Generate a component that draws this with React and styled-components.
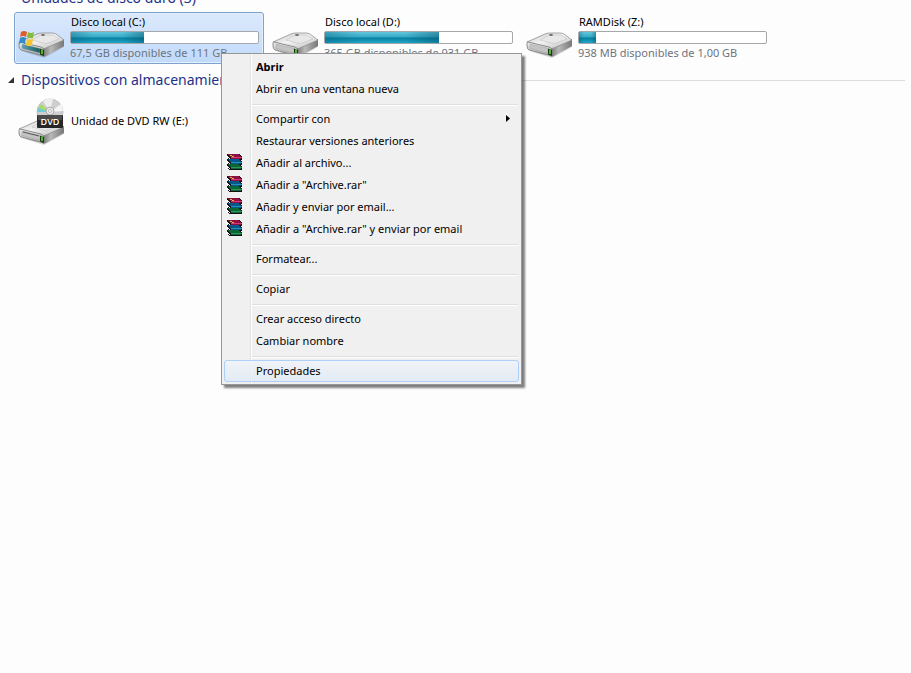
import React from 'react';
import styled, { createGlobalStyle } from 'styled-components';

const GlobalStyle = createGlobalStyle`
  * { box-sizing: border-box; }
  body {
    margin: 0;
    background: #fdfdfd;
    color: #000;
    font-family: "Noto Sans", "Open Sans", sans-serif;
    font-size: 11px;
  }
  button { font: inherit; color: inherit; }
`;

const Explorer = styled.main`
  position: relative;
  min-height: 100vh;
  overflow: hidden;
`;

const Section = styled.section`
  padding: 0 6px 0 8px;
`;

const SectionHeader = styled.header`
  display: flex;
  align-items: ${(p) => (p.$clipped ? 'flex-end' : 'center')};
  gap: 7px;
  height: ${(p) => (p.$clipped ? '12px' : '32px')};
  padding-bottom: ${(p) => (p.$clipped ? '4px' : '0')};
`;

const SectionTitle = styled.h2`
  margin: 0;
  font-family: "Noto Sans", "Open Sans", sans-serif;
  font-size: 14px;
  line-height: 20px;
  font-weight: 400;
  color: #1e3287;
  white-space: nowrap;
`;

const Rule = styled.span`
  flex: 1;
  height: 1px;
  background: #dcdcdc;
`;

const Expander = styled.svg`
  width: 6px;
  height: 6px;
  flex: none;
  fill: #333;
`;

const Tiles = styled.div`
  display: flex;
  flex-wrap: wrap;
  gap: 4px;
  padding-left: 6px;
`;

const Tile = styled.button`
  display: flex;
  align-items: center;
  gap: 5px;
  width: 250px;
  height: 52px;
  padding: 0 4px 2px 2px;
  text-align: left;
  border: 1px solid ${(p) => (p.$selected ? '#7da2ce' : 'transparent')};
  border-radius: 3px;
  background: ${(p) => (p.$selected ? 'linear-gradient(#dbe9fc, #c1dafb)' : 'none')};
  box-shadow: ${(p) => (p.$selected ? 'inset 0 0 0 1px #e4effc' : 'none')};
`;

const DriveArt = styled.svg`
  width: 48px;
  height: 48px;
  flex: none;
`;

const Details = styled.span`
  display: flex;
  flex: 1;
  flex-direction: column;
  gap: 1px;
  white-space: nowrap;
`;

const Name = styled.span`
  padding-left: 1px;
  line-height: 16px;
`;

const Space = styled.span`
  line-height: 16px;
  color: #6d7480;
`;

const Meter = styled.span`
  display: block;
  height: 13px;
  border: 1px solid #a4a8ab;
  border-radius: 2px;
  background: #fff;
`;

const MeterFill = styled.span`
  display: block;
  height: 11px;
  background:
    linear-gradient(90deg, rgba(0, 90, 120, 0.35), transparent 30%, transparent 70%, rgba(0, 70, 95, 0.4)),
    linear-gradient(#62c6dc, #35a9c7 45%, #08809f 55%, #20a8ca);
`;

const Menu = styled.div`
  position: absolute;
  left: 221px;
  top: 53px;
  width: 301px;
  padding: 2px;
  border: 1px solid #979797;
  background: linear-gradient(90deg, #f0f0f0 28px, #e2e3e3 28px, #e2e3e3 29px, #fff 29px, #fff 30px, #f0f0f0 30px);
  box-shadow: 3px 3px 2px rgba(0, 0, 0, 0.5);
`;

const MenuItem = styled.button`
  display: grid;
  grid-template-columns: 31px 1fr 12px;
  align-items: center;
  width: 100%;
  height: 22px;
  padding: 0 0 2px;
  text-align: left;
  white-space: nowrap;
  font-weight: ${(p) => (p.$bold ? 700 : 400)};
  border: 1px solid ${(p) => (p.$active ? '#aecff7' : 'transparent')};
  border-radius: 3px;
  background: ${(p) => (p.$active ? 'linear-gradient(rgba(240, 244, 250, 0.8), rgba(224, 233, 245, 0.8))' : 'none')};
`;

const IconCell = styled.span`
  display: flex;
  padding-left: 1px;
`;

const Separator = styled.hr`
  height: 2px;
  margin: 4px 1px 2px 28px;
  border: 0;
  border-top: 1px solid #dedede;
  background: #fff;
`;

const Glyph = styled.svg`
  width: 16px;
  height: 16px;
`;

const Arrow = styled.svg`
  width: 4px;
  height: 7px;
`;

function DriveBody({ system }) {
  return (
    <>
      <defs>
        <linearGradient id="driveTop" x1="0" y1="0" x2="1" y2="1">
          <stop offset="0" stopColor="#c5c5c5" />
          <stop offset="0.45" stopColor="#f3f3f3" />
          <stop offset="1" stopColor="#bdbdbd" />
        </linearGradient>
        <linearGradient id="driveFront" x1="0" y1="0" x2="0" y2="1">
          <stop offset="0" stopColor="#f1f1f1" />
          <stop offset="1" stopColor="#a4a4a4" />
        </linearGradient>
        <linearGradient id="driveSide" x1="0" y1="0" x2="1" y2="0">
          <stop offset="0" stopColor="#707070" />
          <stop offset="0.4" stopColor="#b9b9b9" />
          <stop offset="1" stopColor="#777" />
        </linearGradient>
        <linearGradient id="driveSystem" x1="0" y1="0" x2="1" y2="0">
          <stop offset="0" stopColor="#5e9fb7" />
          <stop offset="1" stopColor="#165d5b" />
        </linearGradient>
      </defs>
      <path d="M4 38 27 45 47 34 47 32 27 41Z" fill="#000" opacity=".15" />
      <path d="M26 34 47 26V33L29 43Q27 44 25 43Z" fill="url(#driveSide)" />
      <path d="M2 29 20 21Q22 20 25 20H35Q37 20 39 21L47 27 29 35Q27 36 24 35Z" fill="url(#driveTop)" stroke="#858585" strokeWidth=".7" />
      <path d="M15 27 24 22H36L42 26 31 30Q29 31 26 30Z" fill="#e8e8e8" stroke="#b8b8b8" strokeWidth=".5" />
      <path d="M3 29 24 34Q27 35 27 38V43L4 37Q2 36 2 33V30Q2 29 3 29Z" fill="url(#driveFront)" stroke="#777" strokeWidth=".8" />
      <path d="M5 31 23 35.5V40L5 35.5Z" fill={system ? 'url(#driveSystem)' : '#c4c4c4'} stroke="#999" strokeWidth=".4" />
      <path d="M23 35.5 27 37V43L23 41.5Z" fill="#183e16" />
      <path d="M25 36.5V41" stroke="#76e044" strokeWidth="1.4" />
      <ellipse cx="26" cy="22" rx="2" ry=".7" fill="#444" />
    </>
  );
}

function DriveIcon({ kind }) {
  return (
    <DriveArt viewBox="0 0 48 48" aria-hidden="true">
      {kind === 'dvd' ? (
        <>
          <g transform="translate(0 3)">
            <DriveBody />
            <path d="M6 32 22 36" stroke="#555" strokeWidth="1" />
          </g>
          <circle cx="33" cy="15" r="13" fill="#cfcfcf" stroke="#aaa" strokeWidth=".6" />
          <path d="M33 15 26 4A13 13 0 0 1 36 2Z" fill="#eee" />
          <path d="M33 15 21 12A13 13 0 0 1 24 7Z" fill="#a5dc68" />
          <path d="M33 15 20 15A13 13 0 0 1 21 11Z" fill="#72cbd6" />
          <path d="M33 15 44 7A13 13 0 0 1 46 14Z" fill="#f5f5f5" />
          <circle cx="33" cy="14" r="4" fill="#e9e9e9" stroke="#aaa" />
          <circle cx="33" cy="14" r="1.5" fill="#fff" stroke="#888" strokeWidth=".5" />
          <rect x="20" y="18" width="26" height="13" rx="1" fill="#262626" />
          <path d="M21 18H45V23H21Z" fill="#4b4b4b" />
          <text x="33" y="28" textAnchor="middle" fill="#fff" fontFamily="Open Sans" fontSize="9" fontWeight="600">DVD</text>
        </>
      ) : (
        <>
          <DriveBody system={kind === 'system'} />
          {kind === 'system' && (
            <g>
              <path d="M4 19Q7 17 10 19L9 24Q6 22 3 24Z" fill="#e45b28" />
              <path d="M11 19Q14 21 17 19L16 25Q13 26 10 24Z" fill="#83bd38" />
              <path d="M3 25Q6 23 9 25L8 31Q5 29 2 31Z" fill="#358ac8" />
              <path d="M10 26Q13 27 16 26L15 32Q12 34 9 32Z" fill="#f5c52d" />
            </g>
          )}
        </>
      )}
    </DriveArt>
  );
}

const books = [
  { y: 0, cover: '#8c1042', light: '#d93578' },
  { y: 5, cover: '#075789', light: '#2790bd' },
  { y: 10, cover: '#0b6534', light: '#2c9854' },
];

function ArchiveIcon() {
  return (
    <Glyph viewBox="0 0 16 16" shapeRendering="crispEdges" aria-hidden="true">
      {books.map((b) => (
        <g key={b.y} transform={`translate(0 ${b.y})`}>
          <path d="M1 0H13L16 3V6H4L0 3V1Z" fill="#181018" />
          <path d="M1 0H12L15 3H4Z" fill={b.cover} />
          <path d="M5 3H16V4H5Z" fill={b.light} />
          <path d="M0 1 4 4V5L0 3Z" fill="#fff" />
          <path d="M5 4H15V5H5Z" fill={b.cover} />
        </g>
      ))}
      <path d="M4 1H6V2H4ZM6 2H8V3H6Z" fill="#e3b43c" />
    </Glyph>
  );
}

const drives = [
  { name: 'Disco local (C:)', space: '67,5 GB disponibles de 111 GB', used: 39, kind: 'system', selected: true },
  { name: 'Disco local (D:)', space: '365 GB disponibles de 931 GB', used: 61, kind: 'disk' },
  { name: 'RAMDisk (Z:)', space: '938 MB disponibles de 1,00 GB', used: 9, kind: 'disk' },
];

const menuGroups = [
  [{ label: 'Abrir', bold: true }, { label: 'Abrir en una ventana nueva' }],
  [
    { label: 'Compartir con', submenu: true },
    { label: 'Restaurar versiones anteriores' },
    { label: 'Añadir al archivo...', archive: true },
    { label: 'Añadir a "Archive.rar"', archive: true },
    { label: 'Añadir y enviar por email...', archive: true },
    { label: 'Añadir a "Archive.rar" y enviar por email', archive: true },
  ],
  [{ label: 'Formatear...' }],
  [{ label: 'Copiar' }],
  [{ label: 'Crear acceso directo' }, { label: 'Cambiar nombre' }],
  [{ label: 'Propiedades', active: true }],
];

export default function App() {
  return (
    <>
      <GlobalStyle />
      <Explorer>
        <Section>
          <SectionHeader $clipped>
            <Expander viewBox="0 0 6 6" aria-hidden="true" />
            <SectionTitle>Unidades de disco duro (3)</SectionTitle>
          </SectionHeader>
          <Tiles>
            {drives.map((d) => (
              <Tile key={d.name} type="button" $selected={d.selected}>
                <DriveIcon kind={d.kind} />
                <Details>
                  <Name>{d.name}</Name>
                  <Meter><MeterFill style={{ width: `${d.used}%` }} /></Meter>
                  <Space>{d.space}</Space>
                </Details>
              </Tile>
            ))}
          </Tiles>
        </Section>
        <Section>
          <SectionHeader>
            <Expander viewBox="0 0 6 6" aria-hidden="true"><path d="M6 0V6H0Z" /></Expander>
            <SectionTitle>Dispositivos con almacenamiento extraíble (1)</SectionTitle>
            <Rule />
          </SectionHeader>
          <Tiles>
            <Tile type="button">
              <DriveIcon kind="dvd" />
              <Details><Name>Unidad de DVD RW (E:)</Name></Details>
            </Tile>
          </Tiles>
        </Section>
        <Menu role="menu">
          {menuGroups.map((group, i) => (
            <React.Fragment key={group[0].label}>
              {i > 0 && <Separator />}
              {group.map((item) => (
                <MenuItem key={item.label} type="button" role="menuitem" $bold={item.bold} $active={item.active}>
                  <IconCell>{item.archive && <ArchiveIcon />}</IconCell>
                  <span>{item.label}</span>
                  {item.submenu && <Arrow viewBox="0 0 4 7" aria-hidden="true"><path d="M0 0 4 3.5 0 7Z" /></Arrow>}
                </MenuItem>
              ))}
            </React.Fragment>
          ))}
        </Menu>
      </Explorer>
    </>
  );
}
